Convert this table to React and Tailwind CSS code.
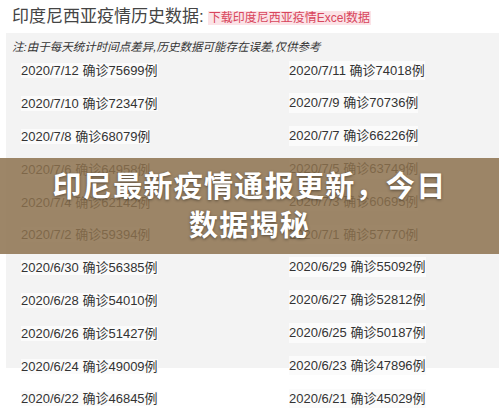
import React from 'react';

const rows = [
  ['2020/7/12 确诊75699例', '2020/7/11 确诊74018例'],
  ['2020/7/10 确诊72347例', '2020/7/9 确诊70736例'],
  ['2020/7/8 确诊68079例', '2020/7/7 确诊66226例'],
  ['2020/7/6 确诊64958例', '2020/7/5 确诊63749例'],
  ['2020/7/4 确诊62142例', '2020/7/3 确诊60695例'],
  ['2020/7/2 确诊59394例', '2020/7/1 确诊57770例'],
  ['2020/6/30 确诊56385例', '2020/6/29 确诊55092例'],
  ['2020/6/28 确诊54010例', '2020/6/27 确诊52812例'],
  ['2020/6/26 确诊51427例', '2020/6/25 确诊50187例'],
  ['2020/6/24 确诊49009例', '2020/6/23 确诊47896例'],
  ['2020/6/22 确诊46845例', '2020/6/21 确诊45029例'],
];

const App = () => {
  return (
    <div
      className="relative w-[499px] h-[415px] overflow-hidden bg-white"
      style={{ fontFamily: '"Liberation Sans", "Noto Sans CJK SC", sans-serif' }}
    >
      {/* Header */}
      <div className="h-[33px] flex items-center pl-[12px] gap-[4px]">
        <span className="text-[17px] text-[#444]">印度尼西亚疫情历史数据:</span>
        <span className="text-[12px] text-[#d8455c] bg-[#fbe3e7] px-[1px] leading-[14px] mt-[2px]">
          下载印度尼西亚疫情Excel数据
        </span>
      </div>

      {/* Table panel */}
      <div className="ml-[6px] bg-[linear-gradient(to_bottom,#f3f3f3_0px,#f3f3f3_335px,#ffffff_335px)]">
        <div className="h-[21px] flex items-end pl-[6px]">
          <span className="text-[11.5px] italic text-[#333] leading-[14px]">
            注:由于每天统计时间点差异,历史数据可能存在误差,仅供参考
          </span>
        </div>
        <div className="flex flex-col">
          {rows.map((r, i) => (
            <div key={i} className="h-[32.8px] flex items-center">
              <span className="w-[283px] pl-[15px]">
                <span className="text-[13px] text-[#333] bg-[#fbfbfb]">{r[0]}</span>
              </span>
              <span className="text-[13px] text-[#333] bg-[#fbfbfb]">{r[1]}</span>
            </div>
          ))}
        </div>
      </div>

      {/* Overlay band */}
      <div className="absolute left-0 top-[158px] w-full h-[96px] bg-[#8c714d]/85 flex flex-col items-center justify-center pb-[5px]">
        <div
          className="text-white font-bold text-[29px] leading-[39px] tracking-[1.3px] text-center [text-shadow:0_1px_3px_rgba(0,0,0,0.45)]"
          style={{ fontFamily: '"Noto Sans CJK SC", sans-serif' }}
        >
          <div>印尼最新疫情通报更新，今日</div>
          <div>数据揭秘</div>
        </div>
      </div>
    </div>
  );
};

export default App;
